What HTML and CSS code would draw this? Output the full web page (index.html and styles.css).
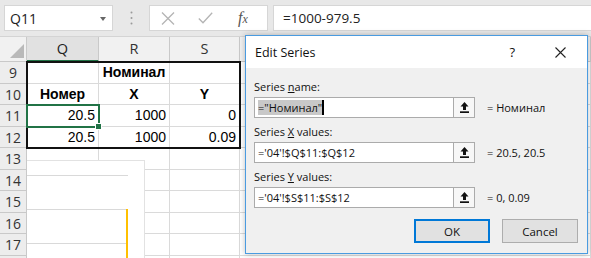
FILE: index.html
```html
<!DOCTYPE html>
<html lang="en">
  <head>
    <meta charset="UTF-8" />
    <title>Edit Series</title>
    <link rel="stylesheet" href="styles.css">
  </head>
  <body>
    <div class="app">
      <div class="fbar">
        <div class="namebox">
          <span>Q11</span>
          <span class="drop"></span>
        </div>
        <div class="grip">
          <svg width="3" height="14" viewBox="0 0 3 14"><circle cx="1.5" cy="1.5" r="1" fill="#9a9a9a"/><circle cx="1.5" cy="7" r="1" fill="#9a9a9a"/><circle cx="1.5" cy="12.5" r="1" fill="#9a9a9a"/></svg>
        </div>
        <div class="fbtns">
          <svg class="ic-x" width="14" height="13" viewBox="0 0 14 13"><path d="M1 0.5 L13 12.5 M13 0.5 L1 12.5" stroke="#b4b4b4" stroke-width="1.3" fill="none"/></svg>
          <svg class="ic-ok" width="15" height="12" viewBox="0 0 15 12"><path d="M0.8 6.5 L5 10.8 L14.2 0.8" stroke="#b4b4b4" stroke-width="1.3" fill="none"/></svg>
          <span class="fx">f<small>x</small></span>
        </div>
        <div class="formula">=1000-979.5</div>
      </div>

      <div class="sheet">
        <div class="grid">
          <div class="corner"><svg width="14" height="14" viewBox="0 0 14 14"><path d="M14 0 L14 14 L0 14 Z" fill="#b9b9b9"/></svg></div>
          <div class="ch on">Q</div>
          <div class="ch">R</div>
          <div class="ch">S</div>
          <div class="ch"></div>

          <div class="rh">9</div>
          <div class="c"></div>
          <div class="c b mid">Номинал</div>
          <div class="c"></div>
          <div class="c"></div>

          <div class="rh">10</div>
          <div class="c b mid">Номер</div>
          <div class="c b mid">X</div>
          <div class="c b mid">Y</div>
          <div class="c"></div>

          <div class="rh">11</div>
          <div class="c num">20.5</div>
          <div class="c num">1000</div>
          <div class="c num">0</div>
          <div class="c"></div>

          <div class="rh">12</div>
          <div class="c num">20.5</div>
          <div class="c num">1000</div>
          <div class="c num">0.09</div>
          <div class="c"></div>

          <div class="rh">13</div><div class="c"></div><div class="c"></div><div class="c"></div><div class="c"></div>
          <div class="rh">14</div><div class="c"></div><div class="c"></div><div class="c"></div><div class="c"></div>
          <div class="rh">15</div><div class="c"></div><div class="c"></div><div class="c"></div><div class="c"></div>
          <div class="rh">16</div><div class="c"></div><div class="c"></div><div class="c"></div><div class="c"></div>
          <div class="rh">17</div><div class="c"></div><div class="c"></div><div class="c"></div><div class="c"></div>
          <div class="rh"></div><div class="c"></div><div class="c"></div><div class="c"></div><div class="c"></div>
        </div>

        <!-- overlays on the sheet -->
        <div class="range"></div>
        <div class="sel"><span class="handle"></span></div>
        <div class="chart">
          <div class="gl"></div>
          <div class="gl"></div>
          <div class="gl"></div>
          <div class="bar"></div>
        </div>
      </div>

      <div class="dialog">
        <div class="dlg-title">
          <span>Edit Series</span>
          <span class="help">?</span>
          <svg class="close" width="11" height="11" viewBox="0 0 11 11"><path d="M0.5 0.5 L10.5 10.5 M10.5 0.5 L0.5 10.5" stroke="#222" stroke-width="1.1" fill="none"/></svg>
        </div>
        <div class="dlg-body">
          <div class="lbl first">Series <u>n</u>ame:</div>
          <div class="row">
            <div class="field"><span class="hl">="Номинал"</span><span class="caret"></span></div>
            <div class="pick"><svg width="9" height="11" viewBox="0 0 9 11"><path d="M4.5 0 L8.5 4.5 H6 V8 H3 V4.5 H0.5 Z" fill="#111"/><rect x="0" y="9.3" width="9" height="1.7" fill="#111"/></svg></div>
            <span class="res">= Номинал</span>
          </div>
          <div class="lbl">Series <u>X</u> values:</div>
          <div class="row">
            <div class="field">='04'!$Q$11:$Q$12</div>
            <div class="pick"><svg width="9" height="11" viewBox="0 0 9 11"><path d="M4.5 0 L8.5 4.5 H6 V8 H3 V4.5 H0.5 Z" fill="#111"/><rect x="0" y="9.3" width="9" height="1.7" fill="#111"/></svg></div>
            <span class="res">= 20.5, 20.5</span>
          </div>
          <div class="lbl">Series <u>Y</u> values:</div>
          <div class="row">
            <div class="field">='04'!$S$11:$S$12</div>
            <div class="pick"><svg width="9" height="11" viewBox="0 0 9 11"><path d="M4.5 0 L8.5 4.5 H6 V8 H3 V4.5 H0.5 Z" fill="#111"/><rect x="0" y="9.3" width="9" height="1.7" fill="#111"/></svg></div>
            <span class="res">= 0, 0.09</span>
          </div>
          <div class="actions">
            <div class="btn def">OK</div>
            <div class="btn">Cancel</div>
          </div>
        </div>
      </div>
    </div>
  </body>
</html>
```

FILE: styles.css
```css
body {
  margin: 0;
  font-family: "Open Sans", "Noto Sans", sans-serif;
  background: #fff;
}
.app {
  position: relative;
  width: 591px;
  height: 258px;
  overflow: hidden;
  background: #fff;
}

/* formula bar */
.fbar {
  height: 37px;
  box-sizing: border-box;
  display: flex;
  align-items: center;
  padding-left: 4px;
  background: #e8e8e8;
  border-bottom: 1px solid #d4d4d4;
}
.namebox {
  width: 109px;
  height: 26px;
  box-sizing: border-box;
  display: flex;
  align-items: center;
  justify-content: space-between;
  padding: 0 6px 0 5px;
  background: #fff;
  border: 1px solid #d6d6d6;
  font-size: 14px;
  color: #222;
}
.drop {
  width: 0;
  height: 0;
  border-left: 3.5px solid transparent;
  border-right: 3.5px solid transparent;
  border-top: 4px solid #666;
  margin-top: 1px;
}
.grip {
  width: 36px;
  display: flex;
  justify-content: center;
}
.fbtns {
  width: 119px;
  height: 26px;
  box-sizing: border-box;
  display: flex;
  align-items: center;
  background: #fff;
  border: 1px solid #d6d6d6;
}
.ic-x {
  margin-left: 11px;
}
.ic-ok {
  margin-left: 23px;
}
.fx {
  margin-left: 25px;
  font-family: "Liberation Serif", serif;
  font-style: italic;
  font-size: 16px;
  color: #555;
  line-height: 1;
}
.fx small {
  font-size: 12px;
}
.formula {
  flex: 1;
  height: 26px;
  box-sizing: border-box;
  margin-left: 5px;
  padding-left: 9px;
  background: #fff;
  border: 1px solid #d6d6d6;
  border-right: none;
  font-size: 13.5px;
  line-height: 24px;
  color: #222;
}

/* sheet */
.sheet {
  position: relative;
}
.grid {
  display: grid;
  grid-template-columns: 27px 72px 71px 70px 1fr;
  grid-template-rows: 25px;
  grid-auto-rows: 21.5px;
}
.grid > div {
  box-sizing: border-box;
  border-right: 1px solid #dadada;
  border-bottom: 1px solid #dadada;
}
.corner {
  background: #f1f1f1;
  display: flex;
  align-items: flex-end;
  justify-content: flex-end;
  padding: 0 2px 3px 0;
}
.grid .corner,
.grid .ch,
.grid .rh {
  border-color: #c9c9c9;
}
.ch {
  background: #f1f1f1;
  text-align: center;
  font-size: 14.5px;
  line-height: 24px;
  color: #333;
}
.grid .ch.on {
  background: #e1e1e1;
  border-bottom: 2px solid #217346;
  color: #222;
}
.rh {
  background: #ededed;
  text-align: center;
  font-size: 14px;
  line-height: 21px;
  color: #333;
}
.c {
  font-family: "Liberation Sans", Arial, sans-serif;
  font-size: 14px;
  line-height: 21px;
  padding: 0 3px;
  color: #000;
  white-space: nowrap;
}
.c.b {
  font-weight: bold;
}
.c.mid {
  text-align: center;
}
.c.num {
  text-align: right;
}
.range {
  position: absolute;
  left: 26px;
  top: 24px;
  width: 215px;
  height: 88px;
  box-sizing: border-box;
  border: 2px solid #111;
}
.sel {
  position: absolute;
  left: 26px;
  top: 67px;
  width: 74px;
  height: 24px;
  box-sizing: border-box;
  border: 2px solid #217346;
}
.handle {
  position: absolute;
  right: -4px;
  bottom: -4px;
  width: 5px;
  height: 5px;
  background: #217346;
  border: 1px solid #fff;
}
.chart {
  position: absolute;
  left: 27px;
  top: 123px;
  width: 118px;
  height: 110px;
  box-sizing: border-box;
  background: #fff;
  border-top: 1px solid #e2e2e2;
  border-right: 1px solid #e2e2e2;
  display: flex;
  flex-direction: column;
  gap: 33px;
  padding-top: 14px;
}
.gl {
  width: 101px;
  height: 1px;
  background: #d9d9d9;
}
.bar {
  position: absolute;
  left: 99px;
  top: 48px;
  width: 2px;
  height: 70px;
  background: #ffc000;
}

/* dialog */
.dialog {
  position: absolute;
  left: 245px;
  top: 35px;
  width: 343px;
  height: 219px;
  box-sizing: border-box;
  background: #f0f0f0;
  border: 1px solid #4a9be0;
  box-shadow: 0 0 6px rgba(0, 0, 0, 0.25);
  color: #111;
}
.dlg-title {
  height: 32px;
  display: flex;
  align-items: center;
  padding-left: 9px;
  background: #fff;
  font-size: 12.5px;
}
.help {
  margin-left: auto;
  font-size: 13px;
}
.close {
  margin: 0 21px 0 40px;
}
.dlg-body {
  padding: 0 8px;
  font-size: 11px;
}
.lbl {
  line-height: 17px;
  margin-top: 5px;
  color: #111;
}
.lbl.first {
  margin-top: 10px;
}
.row {
  display: flex;
  align-items: center;
  margin-top: 2px;
}
.field {
  width: 200px;
  height: 21px;
  box-sizing: border-box;
  display: flex;
  align-items: center;
  padding-left: 3px;
  background: #fff;
  border: 1px solid #ababab;
  white-space: nowrap;
}
.hl {
  background: #c8c8c8;
  line-height: 15px;
}
.caret {
  width: 2px;
  height: 15px;
  background: #000;
}
.pick {
  width: 21px;
  height: 21px;
  box-sizing: border-box;
  display: flex;
  align-items: center;
  justify-content: center;
  background: #f7f7f7;
  border: 1px solid #ababab;
  border-left: none;
}
.res {
  margin-left: 12px;
}
.actions {
  display: flex;
  justify-content: flex-end;
  gap: 12px;
  margin-top: 11px;
  padding-right: 1px;
}
.btn {
  width: 76px;
  height: 24px;
  box-sizing: border-box;
  display: flex;
  align-items: center;
  justify-content: center;
  background: #e1e1e1;
  border: 1px solid #adadad;
  font-size: 11.5px;
}
.btn.def {
  border: 2px solid #0078d7;
}
```
